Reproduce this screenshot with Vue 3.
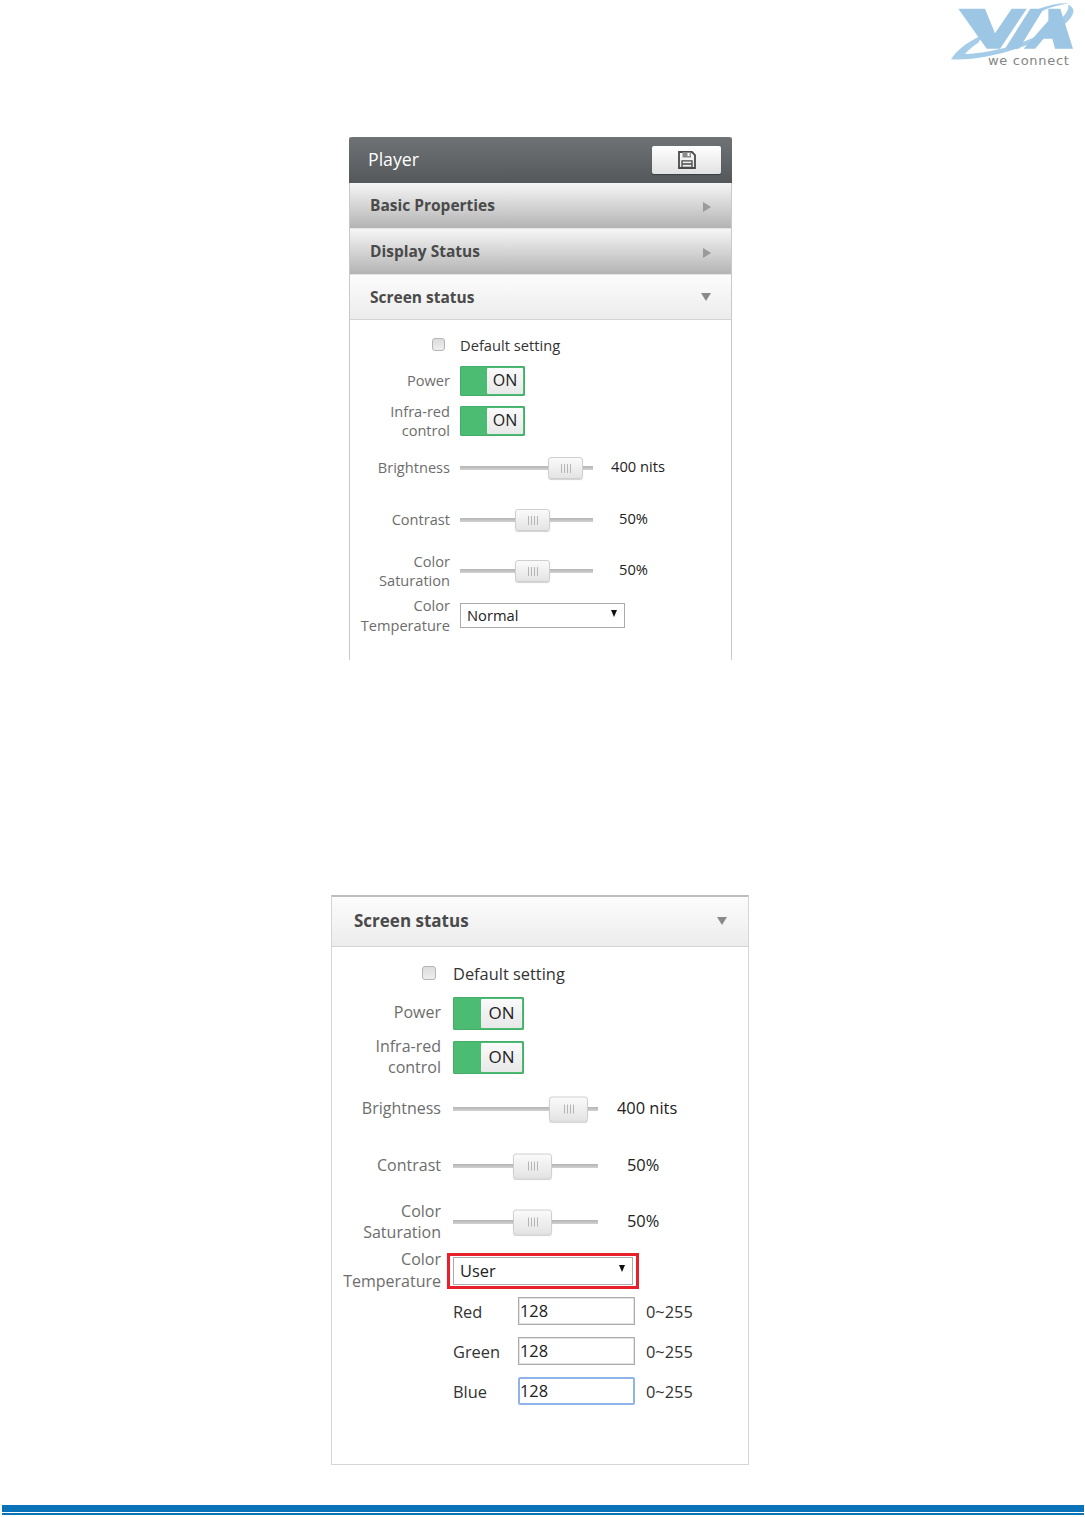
<script setup>
const sliders = [
  { key: 'brightness', label: ['Brightness'], value: '400 nits', pos: 66.3 },
  { key: 'contrast', label: ['Contrast'], value: '50%', pos: 41.6 },
  { key: 'saturation', label: ['Color', 'Saturation'], value: '50%', pos: 41.6 },
]

const panels = [
  { kind: 'small', showMain: true, temp: 'Normal', rgb: [] },
  {
    kind: 'large',
    showMain: false,
    temp: 'User',
    rgb: [
      { name: 'Red', focus: false },
      { name: 'Green', focus: false },
      { name: 'Blue', focus: true },
    ],
  },
]
</script>

<template>
  <div class="page">
    <header class="top">
      <div class="logo">
        <svg class="logo-mark" viewBox="0 0 405 210" width="135" height="70">
          <path d="M18 178 C40 145 75 122 112 106 L100 128 C84 138 70 150 60 162 C150 160 295 118 348 58 C366 38 374 24 368 14 C392 22 392 42 362 70 C300 130 120 186 18 178 Z" fill="#a6cde8" />
          <path d="M282 26 C312 14 346 8 376 10 C358 12 324 18 294 32 Z" fill="#a6cde8" />
          <path d="M40 26 H120 L150 100 L200 26 H245 L165 146 H125 Z" fill="#9cc6e4" />
          <path d="M256 26 H296 L222 146 H180 Z" fill="#9cc6e4" />
          <path d="M310 26 H346 L384 146 H330 L322 116 H296 L270 146 H236 L310 62 Z" fill="#9cc6e4" />
        </svg>
        <span class="logo-text">we connect</span>
      </div>
    </header>

    <section v-for="p in panels" :key="p.kind" class="panel" :class="p.kind">
      <template v-if="p.showMain">
        <div class="bar bar-main">
          <span>Player</span>
          <button class="save" type="button">
            <svg viewBox="0 0 18 18" width="18" height="18">
              <path d="M1 1 H14 L17 4 V17 H1 Z" fill="none" stroke="#4a4a4a" stroke-width="1.8" />
              <path d="M4.5 1 V6.5 H13 V1 Z" fill="#8a8a8a" />
              <rect x="9.5" y="2" width="2" height="3" fill="#fff" />
              <path d="M4 9.8 H14 V16.5 H4 Z M4 13 H14" fill="none" stroke="#4a4a4a" stroke-width="1.3" />
            </svg>
          </button>
        </div>
        <div class="bar bar-closed">
          <span>Basic Properties</span>
          <i class="arrow-right"></i>
        </div>
        <div class="bar bar-closed">
          <span>Display Status</span>
          <i class="arrow-right"></i>
        </div>
      </template>

      <div class="bar bar-open">
        <span>Screen status</span>
        <i class="arrow-down"></i>
      </div>

      <div class="body">
        <div class="row row-default">
          <div class="label label-check"><span class="check"></span></div>
          <div class="text">Default setting</div>
        </div>
        <div class="row row-power">
          <div class="label">Power</div>
          <div class="toggle"><span class="knob">ON</span></div>
        </div>
        <div class="row row-infra">
          <div class="label">Infra-red<br />control</div>
          <div class="toggle"><span class="knob">ON</span></div>
        </div>
        <div v-for="s in sliders" :key="s.key" class="row" :class="'row-' + s.key">
          <div class="label">
            <template v-for="(line, i) in s.label" :key="line"><br v-if="i" />{{ line }}</template>
          </div>
          <div class="slider">
            <span class="thumb" :style="{ left: s.pos + '%' }"><b></b></span>
          </div>
          <div class="value">{{ s.value }}</div>
        </div>
        <div class="row row-temp">
          <div class="label">Color<br />Temperature</div>
          <div class="select-wrap">
            <div class="select">
              <span>{{ p.temp }}</span>
              <i class="select-arrow"></i>
            </div>
          </div>
        </div>
        <div v-for="c in p.rgb" :key="c.name" class="row row-rgb">
          <div class="label"></div>
          <div class="rgb-name">{{ c.name }}</div>
          <div class="input" :class="{ focus: c.focus }">128</div>
          <div class="range">0~255</div>
        </div>
      </div>
    </section>

    <footer class="rule"></footer>
  </div>
</template>

<style>
html, body {
  margin: 0;
  background: #fff;
}
</style>

<style scoped>
.page {
  width: 1085px;
  height: 1517px;
  display: flex;
  flex-direction: column;
  align-items: center;
  font-family: "Open Sans", "Noto Sans", sans-serif;
  color: #222;
  overflow: hidden;
}
.top {
  width: 100%;
  height: 137px;
  display: flex;
  justify-content: flex-end;
}
.logo {
  position: relative;
  width: 135px;
  height: 70px;
  margin-right: 5px;
}
.logo-mark {
  display: block;
}
.logo-text {
  position: absolute;
  left: 43px;
  top: 54px;
  font-family: "DejaVu Sans", sans-serif;
  font-size: 13px;
  line-height: 14px;
  letter-spacing: 0.7px;
  color: #858585;
  white-space: nowrap;
}

.panel {
  box-sizing: border-box;
  border-left: 1px solid #c9c9c9;
  border-right: 1px solid #c9c9c9;
}
.panel.small {
  width: 383px;
  height: 523px;
  margin-left: -4px;
  --label-w: 100px;
  --gap: 10px;
  --label-fs: 14.6px;
  font-size: 14.7px;
}
.panel.large {
  width: 418px;
  height: 570px;
  margin-top: 235px;
  margin-left: -5px;
  --label-w: 109px;
  --gap: 12px;
  --label-fs: 16px;
  font-size: 16.4px;
  border: 1px solid #d6d6d6;
  border-top: 2px solid #bdbdbd;
}

.bar {
  box-sizing: border-box;
  display: flex;
  align-items: center;
  justify-content: space-between;
  padding: 0 20px 1px;
  font-weight: 700;
  color: #4a4a4a;
}
.small .bar {
  height: 46px;
  font-size: 15.5px;
}
.small .bar-main {
  font-weight: 400;
  font-size: 17.7px;
  color: #fff;
  padding: 0 11px 2px 19px;
  border-radius: 3px 3px 0 0;
  background: linear-gradient(#6f7375, #54585a);
  margin: 0 -1px;
}
.bar-closed {
  background: linear-gradient(#f6f6f6, #b3b3b3);
  border-bottom: 1px solid #e4e4e4;
}
.bar-open {
  background: linear-gradient(#fcfcfc, #ececec);
  border-bottom: 1px solid #d4d4d4;
}
.small .bar-open {
  height: 45px;
}
.large .bar {
  height: 50px;
  font-size: 17px;
  padding: 0 21px 2px 22px;
}
.save {
  width: 69px;
  height: 28px;
  margin-top: 2px;
  display: flex;
  align-items: center;
  justify-content: center;
  padding: 0;
  border: 0;
  border-radius: 2px;
  background: linear-gradient(#ffffff, #e2e2e2);
  box-shadow: 0 1px 1px rgba(0, 0, 0, 0.35);
}
.arrow-right {
  width: 0;
  height: 0;
  margin-top: 3px;
  border-left: 8px solid #9a9a9a;
  border-top: 5px solid transparent;
  border-bottom: 5px solid transparent;
}
.arrow-down {
  width: 0;
  height: 0;
  border-top: 8px solid #8a8a8a;
  border-left: 5px solid transparent;
  border-right: 5px solid transparent;
}

.body {
  padding-top: 13px;
}
.row {
  display: flex;
  align-items: center;
}
.label {
  width: var(--label-w);
  flex: none;
  margin-right: var(--gap);
  text-align: right;
  font-size: var(--label-fs);
  color: #6d6d6d;
  line-height: 1.32;
}
.label-check {
  display: flex;
  justify-content: flex-end;
}
.text {
  margin-bottom: 1px;
  color: #333;
}
.check {
  display: block;
  box-sizing: border-box;
  margin-bottom: 2px;
  background: linear-gradient(#dcdcdc, #eeeeee);
  border: 1px solid #b4b4b4;
  border-radius: 3px;
}
.small .check {
  width: 13px;
  height: 13px;
  margin-right: 5px;
}
.large .check {
  width: 14px;
  height: 14px;
  margin-right: 5px;
}

.small .row-default { height: 25px; }
.small .row-power { height: 45px; }
.small .row-infra { height: 36px; }
.small .row-brightness { height: 58px; }
.small .row-contrast { height: 46px; }
.small .row-saturation { height: 56px; }
.small .row-temp { height: 33px; }

.large .row-default { height: 28px; }
.large .row-power { height: 50px; }
.large .row-infra { height: 38px; }
.large .row-brightness { height: 66px; }
.large .row-contrast { height: 48px; }
.large .row-saturation { height: 64px; }
.large .row-temp { height: 33px; margin-bottom: 4px; }
.large .row-rgb { height: 40px; }

.toggle {
  box-sizing: border-box;
  position: relative;
  flex: none;
  background: #4cbc73;
  border-radius: 2px;
  box-shadow: inset 0 0 0 1px #44ad69;
}
.small .toggle {
  width: 65px;
  height: 30px;
  font-size: 16px;
}
.large .toggle {
  width: 71px;
  height: 33px;
  font-size: 17px;
}
.knob {
  box-sizing: border-box;
  position: absolute;
  top: 2px;
  right: 2px;
  bottom: 2px;
  padding-bottom: 2px;
  display: flex;
  align-items: center;
  justify-content: center;
  background: linear-gradient(#fafafa, #e8e8e8);
  border-radius: 1px;
  color: #222;
}
.small .knob {
  width: 36px;
}
.large .knob {
  width: 41px;
}

.slider {
  position: relative;
  flex: none;
  height: 4px;
  background: linear-gradient(#b4b4b4, #d2d2d2);
}
.small .slider {
  width: 133px;
}
.large .slider {
  width: 145px;
}
.thumb {
  position: absolute;
  top: 50%;
  transform: translateY(-50%);
  box-sizing: border-box;
  display: flex;
  align-items: center;
  justify-content: center;
  background: linear-gradient(#fafafa, #e4e4e4);
  border: 1px solid #cfcfcf;
  border-radius: 3px;
  box-shadow: 0 1px 1px rgba(0, 0, 0, 0.18);
}
.small .thumb {
  width: 35px;
  height: 22px;
}
.large .thumb {
  width: 39px;
  height: 25px;
}
.thumb b {
  width: 10px;
  height: 9px;
  background: repeating-linear-gradient(90deg, #b5b5b5 0 1px, transparent 1px 3px);
}
.value {
  flex: 1;
  margin-bottom: 4px;
  color: #222;
}
.small .value {
  margin-left: 18px;
}
.large .value {
  margin-left: 19px;
}
.small .row-contrast .value,
.small .row-saturation .value {
  padding-left: 8px;
}
.large .row-contrast .value,
.large .row-saturation .value {
  padding-left: 10px;
}

.select {
  box-sizing: border-box;
  display: flex;
  align-items: center;
  justify-content: space-between;
  border: 1px solid #ababab;
  background: #fff;
  color: #222;
}
.small .select {
  width: 165px;
  height: 25px;
  padding: 0 7px 1px 6px;
}
.large .select {
  width: 180px;
  height: 28px;
  padding: 0 7px 1px 6px;
}
.large .select-wrap {
  border: 3px solid #e8202c;
  padding: 1px 3px;
  margin-left: -6px;
}
.select-arrow {
  width: 0;
  height: 0;
  margin-bottom: 3px;
  border-top: 7px solid #111;
  border-left: 3.5px solid transparent;
  border-right: 3.5px solid transparent;
}

.rgb-name {
  width: 65px;
  flex: none;
  color: #333;
}
.input {
  box-sizing: border-box;
  width: 117px;
  height: 28px;
  padding-left: 1px;
  line-height: 26px;
  border: 1px solid #ababab;
  box-shadow: inset 0 0 0 1px #e4e4e4;
  color: #222;
}
.input.focus {
  border: 2px solid #8fb4ea;
  border-radius: 2px;
  line-height: 24px;
  padding-left: 0;
  box-shadow: none;
}
.range {
  margin-left: 11px;
  color: #333;
}

.rule {
  flex: none;
  width: 1082px;
  height: 7px;
  margin-top: 40px;
  margin-left: 1px;
  background: #0a72b8;
  box-shadow: 0 1px 0 #fff, 0 3px 0 #0a72b8;
}
</style>
